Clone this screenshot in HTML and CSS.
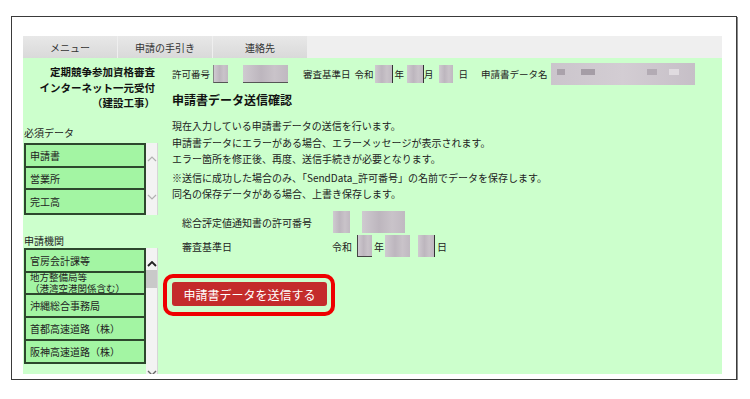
FILE: index.html
```html
<!DOCTYPE html>
<html lang="ja">
<head>
    <meta charset="UTF-8">
    <meta name="viewport" content="width=device-width, initial-scale=1.0">
    <title>申請書データ送信確認</title>
    <link rel="stylesheet" href="styles.css">
</head>
<body>
    <div class="frame">
        <div class="tabbar">
            <div class="tab">メニュー</div>
            <div class="tab">申請の手引き</div>
            <div class="tab">連絡先</div>
        </div>

        <div class="main">
            <!-- left side menu -->
            <div class="side">
                <div class="side-title">定期競争参加資格審査<br>インターネット一元受付<br>（建設工事）</div>

                <div class="side-label">必須データ</div>
                <div class="listbox">
                    <div class="items">
                        <div class="item">申請書</div>
                        <div class="item">営業所</div>
                        <div class="item">完工高</div>
                    </div>
                    <div class="scroll">
                        <svg class="arrow" width="10" height="6" viewBox="0 0 10 6"><polyline points="1,5 5,1 9,5" fill="none" stroke="#b0b0b0" stroke-width="1.2"/></svg>
                        <svg class="arrow" width="10" height="6" viewBox="0 0 10 6"><polyline points="1,1 5,5 9,1" fill="none" stroke="#b0b0b0" stroke-width="1.2"/></svg>
                    </div>
                </div>

                <div class="side-label second">申請機関</div>
                <div class="listbox cut">
                    <div class="items">
                        <div class="item">官房会計課等</div>
                        <div class="item two"><span>地方整備局等</span><span>（港湾空港関係含む）</span></div>
                        <div class="item">沖縄総合事務局</div>
                        <div class="item">首都高速道路（株）</div>
                        <div class="item">阪神高速道路（株）</div>
                    </div>
                    <div class="scroll active">
                        <svg class="arrow" width="10" height="6" viewBox="0 0 10 6"><polyline points="1,5 5,1 9,5" fill="none" stroke="#222" stroke-width="1.8"/></svg>
                        <div class="thumb"></div>
                        <svg class="arrow bottom" width="10" height="6" viewBox="0 0 10 6"><polyline points="1,1 5,5 9,1" fill="none" stroke="#666" stroke-width="1.4"/></svg>
                    </div>
                </div>
            </div>

            <!-- confirm panel -->
            <div class="content">
                <div class="info-row">
                    <span>許可番号</span>
                    <span class="blur field b1"></span>
                    <span class="blur field b2"></span>
                    <span class="lbl-date">審査基準日</span>
                    <span class="era">令和</span>
                    <span class="blur field y"></span>
                    <span class="unit">年</span>
                    <span class="blur field m"></span>
                    <span>月</span>
                    <span class="blur field d"></span>
                    <span class="day">日</span>
                    <span class="lbl-name">申請書データ名</span>
                    <span class="blur name"></span>
                </div>

                <h2 class="title">申請書データ送信確認</h2>

                <p class="msg">現在入力している申請書データの送信を行います。<br>
                申請書データにエラーがある場合、エラーメッセージが表示されます。<br>
                エラー箇所を修正後、再度、送信手続きが必要となります。</p>
                <p class="msg note">※送信に成功した場合のみ、「SendData_許可番号」の名前でデータを保存します。<br>
                同名の保存データがある場合、上書き保存します。</p>

                <div class="form">
                    <div class="form-row">
                        <div class="form-label">総合評定値通知書の許可番号</div>
                        <div class="form-value">
                            <span class="blur box f1"></span>
                            <span class="blur box f2"></span>
                        </div>
                    </div>
                    <div class="form-row">
                        <div class="form-label">審査基準日</div>
                        <div class="form-value">
                            <span>令和</span>
                            <span class="blur box d1"></span>
                            <span>年</span>
                            <span class="blur box d2"></span>
                            <span class="blur box d3"></span>
                            <span>日</span>
                        </div>
                    </div>
                </div>

                <div class="send-wrap">
                    <button class="send-btn">申請書データを送信する</button>
                </div>
            </div>
        </div>
    </div>
</body>
</html>
```

FILE: styles.css
```css
* {
    margin: 0;
    padding: 0;
    box-sizing: border-box;
}

body {
    font-family: "Noto Sans CJK JP", "Noto Sans", sans-serif;
    font-size: 10px;
    color: #222;
    background-color: #fff;
    padding: 16px 0 0 11px;
}

.frame {
    width: 726px;
    height: 364px;
    border: 1px solid #3a3a3a;
    box-shadow: 1px 1px 0 #8a8a8a;
    padding: 19px 14px 5px 11px;
}

/* ---------- tabs ---------- */
.tabbar {
    display: flex;
    height: 22px;
    background-color: #efefef;
}

.tab {
    width: 94px;
    margin-right: 1px;
    display: flex;
    align-items: center;
    justify-content: center;
    background: linear-gradient(#e8e8e8, #d9d9d9);
    color: #333;
}

/* ---------- green body ---------- */
.main {
    display: flex;
    height: 316px;
    overflow: hidden;
    background-color: #ccffcc;
}

.side {
    width: 137px;
    flex-shrink: 0;
    padding-left: 1px;
}

.side-title {
    text-align: right;
    padding: 6px 5px 0 0;
    font-size: 10.5px;
    font-weight: bold;
    line-height: 15.7px;
    color: #111;
}

.side-label {
    margin-top: 15px;
    line-height: 14px;
}

.side-label.second {
    margin-top: 19px;
}

.listbox {
    display: flex;
    width: 135px;
    margin-top: 3px;
}

.listbox.cut {
    margin-top: 0;
    height: 134px;
}

.items {
    width: 122px;
    border: 2px solid #2d472d;
    background-color: #a3f5a3;
}

.listbox.cut .items {
    align-self: flex-start;
    border-bottom: none;
}

.item {
    height: 22.6px;
    display: flex;
    align-items: center;
    padding-left: 4px;
    border-bottom: 2px solid #2d472d;
    white-space: nowrap;
}

.listbox.cut .item {
    height: 22.8px;
}

.items .item:last-child {
    border-bottom: none;
}

.listbox.cut .items .item:last-child {
    border-bottom: 2px solid #2d472d;
}

.item.two {
    flex-direction: column;
    align-items: flex-start;
    justify-content: center;
    font-family: "Liberation Sans", "Noto Sans CJK JP", sans-serif;
    font-size: 9.5px;
    line-height: 11px;
}

.scroll {
    width: 12px;
    background-color: #f3f3f3;
    border-right: 1px solid #d6d6d6;
    display: flex;
    flex-direction: column;
    align-items: center;
    justify-content: space-between;
    padding: 13px 0 15px;
}

.scroll.active {
    justify-content: flex-start;
    padding: 13px 0 0;
    position: relative;
}

.thumb {
    width: 11px;
    height: 18px;
    margin-top: 3px;
    background-color: #c9c9c9;
}

.scroll .arrow.bottom {
    position: absolute;
    bottom: 6px;
    left: 1px;
}

/* ---------- right panel ---------- */
.content {
    flex: 1;
    padding-left: 12px;
}

.info-row {
    display: flex;
    align-items: center;
    height: 22px;
    margin-top: 5px;
    font-size: 9.5px;
    white-space: nowrap;
}

.info-row .lbl-date { margin-left: 15px; }
.info-row .era { margin-left: 4px; }
.info-row .unit { margin-left: 2px; }
.info-row .day { margin-left: 6px; }
.info-row .lbl-name { margin-left: 13px; }

.blur {
    display: inline-block;
    background: linear-gradient(90deg, #cfcad0, #bdb6be 40%, #c9c3c9 70%, #c0b9c1);
}

.field {
    height: 18px;
}

.field.b1 {
    width: 15px;
    margin-left: 3px;
    border-bottom: 1px solid #555;
    border-left: 1px solid #888;
}

.field.b2 {
    width: 45px;
    margin-left: 15px;
    border-bottom: 1px solid #555;
}

.field.y {
    width: 18px;
    margin-left: 1px;
    border-right: 1px solid #333;
}

.field.m {
    width: 17px;
    margin-left: 3px;
    border-right: 1px solid #333;
}

.field.d {
    width: 14px;
    margin-left: 5px;
}

.name {
    width: 144px;
    height: 22px;
    margin-left: 3px;
    background:
        linear-gradient(90deg, transparent 6px, #aaa2ab 6px, #aaa2ab 14px, transparent 14px, transparent 30px, #a59da6 30px, #a59da6 44px, transparent 44px, transparent 96px, #b3abb4 96px, #b3abb4 106px, transparent 106px, transparent 118px, #e0dbe0 118px, #e0dbe0 128px, transparent 128px) top 6px left 0 / 100% 6px no-repeat,
        linear-gradient(90deg, #cbc5cc, #d3cdd3 50%, #c6bfc7);
}

.title {
    margin-top: 7px;
    font-size: 12px;
    font-weight: bold;
    line-height: 16px;
    color: #111;
}

.msg {
    margin-top: 10px;
    line-height: 16.7px;
}

.msg.note {
    margin-top: 1.6px;
}

.form {
    margin-top: 7px;
    padding-left: 10px;
}

.form-row {
    display: flex;
    align-items: center;
    height: 24px;
}

.form-label {
    width: 150px;
}

.form-value {
    display: flex;
    align-items: center;
}

.box {
    height: 22px;
}

.box.f1 { width: 17px; margin-left: 1px; }
.box.f2 { width: 43px; margin-left: 12px; }
.box.d1 { width: 15px; margin: 0 2px 0 5px; border-left: 1px solid #444; border-bottom: 1px solid #444; }
.box.d2 { width: 25px; margin-left: 1px; }
.box.d3 { width: 17px; margin: 0 2px 0 8px; border-right: 1px solid #333; }

/* ---------- send button ---------- */
.send-wrap {
    position: relative;
    display: inline-block;
    margin-top: 24px;
}

.send-wrap::before {
    content: "";
    position: absolute;
    top: -8px;
    left: -9px;
    right: -8px;
    bottom: -10px;
    border: 4px solid #ee0000;
    border-radius: 10px;
}

.send-btn {
    display: block;
    width: 155px;
    height: 24px;
    border: none;
    border-radius: 3px;
    background-color: #c42b2b;
    color: #fff;
    font-family: "Noto Sans CJK JP", sans-serif;
    font-size: 12px;
}
```
